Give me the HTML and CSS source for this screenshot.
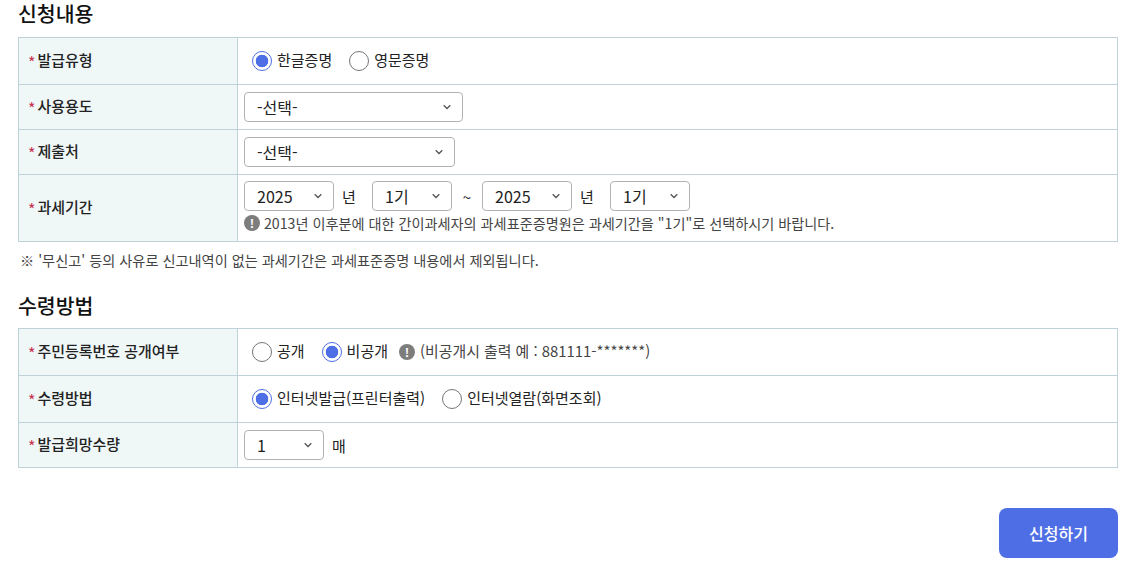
FILE: index.html
```html
<!DOCTYPE html>
<html lang="ko">
<head>
<meta charset="utf-8">
<title>신청내용</title>
<link rel="stylesheet" href="styles.css">
</head>
<body>
<main class="page">
  <h2 class="title title-first">신청내용</h2>
  <div class="table">
    <div class="row row-a">
      <div class="th"><span class="req">*</span>발급유형</div>
      <div class="td radios">
        <label class="radio"><input type="radio" name="a" checked>한글증명</label>
        <label class="radio"><input type="radio" name="a">영문증명</label>
      </div>
    </div>
    <div class="row row-b">
      <div class="th"><span class="req">*</span>사용용도</div>
      <div class="td"><select class="sel w219"><option>-선택-</option></select></div>
    </div>
    <div class="row row-b">
      <div class="th"><span class="req">*</span>제출처</div>
      <div class="td"><select class="sel w211"><option>-선택-</option></select></div>
    </div>
    <div class="row row-c">
      <div class="th"><span class="req">*</span>과세기간</div>
      <div class="td stack">
        <div class="period">
          <select class="sel w90"><option>2025</option></select><span class="unit">년</span>
          <select class="sel w80"><option>1기</option></select><span class="tilde">~</span>
          <select class="sel w90"><option>2025</option></select><span class="unit">년</span>
          <select class="sel w80"><option>1기</option></select>
        </div>
        <p class="hint"><span class="info">!</span>2013년 이후분에 대한 간이과세자의 과세표준증명원은 과세기간을 "1기"로 선택하시기 바랍니다.</p>
      </div>
    </div>
  </div>
  <p class="note">※ '무신고' 등의 사유로 신고내역이 없는 과세기간은 과세표준증명 내용에서 제외됩니다.</p>
  <h2 class="title title-second">수령방법</h2>
  <div class="table">
    <div class="row row-a">
      <div class="th"><span class="req">*</span>주민등록번호 공개여부</div>
      <div class="td radios">
        <label class="radio"><input type="radio" name="b">공개</label>
        <label class="radio"><input type="radio" name="b" checked>비공개</label>
        <span class="example"><span class="info">!</span>(비공개시 출력 예 : 881111-*******)</span>
      </div>
    </div>
    <div class="row row-a">
      <div class="th"><span class="req">*</span>수령방법</div>
      <div class="td radios">
        <label class="radio"><input type="radio" name="c" checked>인터넷발급(프린터출력)</label>
        <label class="radio"><input type="radio" name="c">인터넷열람(화면조회)</label>
      </div>
    </div>
    <div class="row row-b">
      <div class="th"><span class="req">*</span>발급희망수량</div>
      <div class="td"><select class="sel w80"><option>1</option></select><span class="unit">매</span></div>
    </div>
  </div>
  <div class="actions"><button class="submit" type="button">신청하기</button></div>
</main>
</body>
</html>
```
FILE: styles.css
```css
* { box-sizing: border-box; }
html, body { margin: 0; padding: 0; background: #fff; }
body {
  font-family: "Noto Sans CJK KR", "Noto Sans", sans-serif;
  color: #222;
  font-size: 15px;
  overflow: hidden;
}
.page { width: 1137px; padding: 0 19px 0 18px; }
.title { margin: 0; font-size: 20.5px; font-weight: 500; line-height: 26px; color: #111; }
.title-first { height: 37px; }
.title-second { height: 36px; margin-top: 22px; }
.table { border: 1px solid #bfd2d9; border-bottom: 0; }
.row { display: grid; grid-template-columns: 219px 1fr; border-bottom: 1px solid #bfd2d9; }
.row-a { height: 47px; }
.row-b { height: 45px; }
.row-c { height: 67px; }
.th {
  background: #eff7f7;
  border-right: 1px solid #bfd2d9;
  display: flex;
  align-items: center;
  padding: 0 0 4px 9px;
  font-weight: 500;
  font-size: 15px;
  letter-spacing: -0.05px;
  color: #222;
}
.req { color: #c8324f; width: 9.5px; font-size: 16px; font-weight: 400; line-height: 20px; padding-top: 6px; }
.td { display: flex; align-items: center; padding-left: 6px; }
.radios { padding-left: 14px; gap: 17px; }
.radio { display: flex; align-items: flex-start; gap: 5px; font-size: 15px; line-height: 18px; color: #222; }
.radio input {
  appearance: none;
  margin: 0;
  width: 20px;
  height: 20px;
  border-radius: 50%;
  border: 1px solid #767676;
  background: #fff;
}
.radio input:checked {
  border-color: #4e6ee5;
  background: radial-gradient(circle, #4e6ee5 0, #4e6ee5 6px, #fff 6.6px);
}
.sel {
  appearance: none;
  height: 30px;
  border: 1px solid #b3b3b3;
  border-radius: 4px;
  background: #fff url("data:image/svg+xml,%3Csvg xmlns='http://www.w3.org/2000/svg' width='10' height='6'%3E%3Cpath d='M1.7 1.3 5 4.5 8.3 1.3' fill='none' stroke='%23555' stroke-width='1.3'/%3E%3C/svg%3E") no-repeat right 10px center;
  padding: 0 0 0 12px;
  font-family: inherit;
  font-size: 16px;
  color: #222;
}
.w219 { width: 219px; }
.w211 { width: 211px; }
.w90 { width: 90px; }
.w80 { width: 80px; }
.stack { flex-direction: column; align-items: flex-start; justify-content: flex-start; padding-top: 6px; }
.period { display: flex; align-items: center; }
.unit { margin: 0 8px; font-size: 15px; width: 14px; }
.period .unit { margin: 0 16px 0 8px; }
.tilde { margin: 0 10px; font-size: 15px; width: 10px; text-align: center; }
.hint { margin: 2px 0 0; display: flex; align-items: center; font-size: 14.17px; color: #444; line-height: 20px; }
.info {
  width: 16px;
  height: 16px;
  border-radius: 50%;
  background: #7d7d7d;
  color: #fff;
  font-size: 12px;
  font-weight: 700;
  line-height: 16px;
  text-align: center;
  margin-right: 4px;
  flex: none;
}
.example { display: flex; align-items: flex-start; font-size: 14.9px; line-height: 14px; color: #444; margin-left: -6px; }
.example .info { margin-right: 5px; }
.note { margin: 8px 0 0 2px; font-size: 14.2px; line-height: 20px; color: #444; }
.actions { display: flex; justify-content: flex-end; margin-top: 40px; }
.submit {
  width: 119px;
  height: 50px;
  border: 0;
  border-radius: 8px;
  background: #4e6ee5;
  color: #fff;
  font-family: inherit;
  font-size: 16px;
  font-weight: 500;
}
```
